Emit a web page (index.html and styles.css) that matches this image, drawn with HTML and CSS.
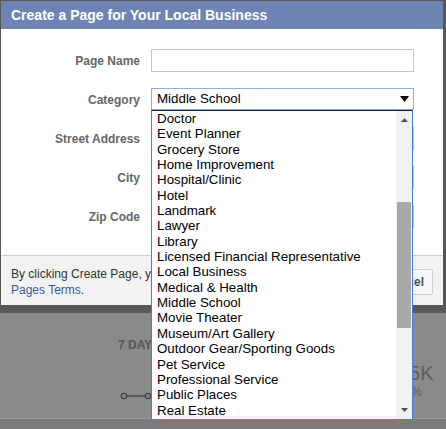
FILE: index.html
```html
<!DOCTYPE html>
<html lang="en">
<head>
<meta charset="utf-8">
<title>Create a Page for Your Local Business</title>
<link rel="stylesheet" href="styles.css">
</head>
<body>
<div class="dialog">
  <div class="dlg-header">Create a Page for Your Local Business</div>
  <div class="form">
    <label class="lbl">Page Name</label>
    <div class="input"></div>

    <label class="lbl">Category</label>
    <div class="select">
      <span class="sel-value">Middle School</span>
      <svg class="caret" width="9" height="6" viewBox="0 0 9 6"><polygon points="0,0 9,0 4.5,6" fill="#000"/></svg>
      <div class="dropdown">
        <div class="opt">Doctor</div>
        <div class="opt">Event Planner</div>
        <div class="opt">Grocery Store</div>
        <div class="opt">Home Improvement</div>
        <div class="opt">Hospital/Clinic</div>
        <div class="opt">Hotel</div>
        <div class="opt">Landmark</div>
        <div class="opt">Lawyer</div>
        <div class="opt">Library</div>
        <div class="opt">Licensed Financial Representative</div>
        <div class="opt">Local Business</div>
        <div class="opt">Medical &amp; Health</div>
        <div class="opt">Middle School</div>
        <div class="opt">Movie Theater</div>
        <div class="opt">Museum/Art Gallery</div>
        <div class="opt">Outdoor Gear/Sporting Goods</div>
        <div class="opt">Pet Service</div>
        <div class="opt">Professional Service</div>
        <div class="opt">Public Places</div>
        <div class="opt">Real Estate</div>
        <div class="scrollbar">
          <svg class="sb-up" width="7" height="4" viewBox="0 0 7 4"><polygon points="0,4 7,4 3.5,0" fill="#505050"/></svg>
          <div class="thumb"></div>
          <svg class="sb-down" width="7" height="4" viewBox="0 0 7 4"><polygon points="0,0 7,0 3.5,4" fill="#505050"/></svg>
        </div>
      </div>
    </div>

    <label class="lbl">Street Address</label>
    <div class="input"></div>

    <label class="lbl">City</label>
    <div class="input"></div>

    <label class="lbl">Zip Code</label>
    <div class="input"></div>
  </div>
  <div class="dlg-footer">
    <p class="terms">By clicking Create Page, you<br><a href="#">Pages Terms</a>.</p>
    <div class="buttons">
      <button class="btn">Cancel</button>
    </div>
  </div>
</div>
<div class="page">
  <div class="stat-left">
    <div class="stat-title">7 DAY</div>
    <svg class="connector" width="34" height="10" viewBox="0 0 34 10">
      <circle cx="6" cy="5" r="2.6" fill="none" stroke="#474747" stroke-width="1.4"/>
      <line x1="8.6" y1="5" x2="27.4" y2="5" stroke="#474747" stroke-width="1.4"/>
      <circle cx="30" cy="5" r="2.6" fill="none" stroke="#474747" stroke-width="1.4"/>
    </svg>
  </div>
  <div class="stat-right">
    <div class="stat-big">15K</div>
    <div class="stat-small">12%</div>
  </div>
</div>
</body>
</html>
```

FILE: styles.css
```css
* { box-sizing: border-box; }
html, body { margin: 0; padding: 0; }
body {
  width: 446px;
  height: 429px;
  overflow: hidden;
  background: #7b7b7b;
  font-family: "Liberation Sans", Arial, Helvetica, sans-serif;
}

.dialog {
  width: 446px;
  background: #fff;
  border-style: solid;
  border-color: #575757;
  border-width: 1px 3px 8px 1px;
}

.dlg-header {
  height: 28px;
  line-height: 28px;
  padding-left: 10px;
  background: #6d84b4;
  color: #fff;
  font-size: 14px;
  font-weight: bold;
}

.form {
  display: grid;
  grid-template-columns: 139px 263px;
  grid-auto-rows: 23px;
  column-gap: 11px;
  row-gap: 16px;
  padding: 20px 0 27px;
}

.lbl {
  align-self: center;
  text-align: right;
  font-size: 12px;
  font-weight: bold;
  color: #666;
}

.input {
  border: 1px solid #bdc7d8;
  background: #fff;
}

.select {
  position: relative;
  height: 22px;
  border: 1px solid #8aaee8;
  background: #fff;
  padding-left: 5px;
  font-size: 13.33px;
  line-height: 20px;
  color: #000;
}

.caret {
  position: absolute;
  right: 4px;
  top: 7px;
}

.dropdown {
  position: absolute;
  left: -1px;
  top: 21px;
  width: 262px;
  height: 310px;
  background: #fff;
  border: 1px solid #3f80e6;
  border-top-color: #1c1c1c;
  padding-bottom: 1px;
  overflow: hidden;
  z-index: 5;
}

.opt {
  height: 15.35px;
  line-height: 15.35px;
  padding-left: 5px;
  font-size: 13.33px;
  color: #000;
  white-space: nowrap;
}

.scrollbar {
  position: absolute;
  top: 0;
  right: 0;
  bottom: 0;
  width: 16px;
  background: #f1f1f1;
}

.thumb {
  position: absolute;
  left: 1px;
  right: 1px;
  top: 91px;
  height: 126px;
  background: #a9a9a9;
}

.sb-up {
  position: absolute;
  left: 5px;
  top: 7px;
}

.sb-down {
  position: absolute;
  left: 5px;
  top: 297px;
}

.dlg-footer {
  display: flex;
  justify-content: space-between;
  align-items: center;
  background: #f2f2f2;
  border-top: 1px solid #ccc;
  padding: 10px 10px 7px;
}

.terms {
  margin: 0;
  font-size: 12px;
  line-height: 16px;
  color: #333;
}

.terms a {
  color: #3b5998;
  text-decoration: none;
}

.buttons {
  display: flex;
  gap: 4px;
}

.btn {
  height: 26px;
  padding: 0 8px;
  font-family: "Liberation Sans", Arial, Helvetica, sans-serif;
  font-size: 12px;
  font-weight: bold;
  color: #4b4f56;
  background: #f6f7f9;
  border: 1px solid #ced0d4;
  border-radius: 2px;
}

.page {
  height: 106px;
  background: #8a8a8a;
  border-bottom: 1px solid #9c9c9c;
  display: grid;
  grid-template-columns: 118px 280px 1fr;
  padding-top: 25px;
}

.stat-left {
  grid-column: 2;
}

.stat-title {
  font-size: 12px;
  line-height: 14px;
  font-weight: bold;
  color: #555;
  white-space: nowrap;
}

.connector {
  display: block;
  margin-top: 39px;
}

.stat-right {
  grid-column: 3;
  padding-top: 23px;
  color: #5c5c5c;
}

.stat-big {
  font-size: 20px;
  line-height: 24px;
}

.stat-small {
  font-size: 12px;
  line-height: 14px;
}
```
